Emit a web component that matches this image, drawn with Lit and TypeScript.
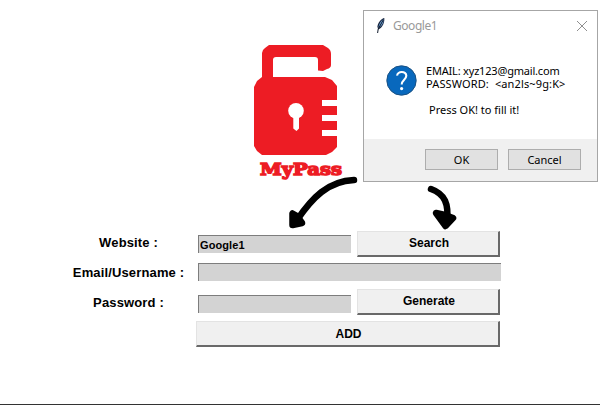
import { LitElement, html, css } from "lit";
import { customElement, property } from "lit/decorators.js";

@customElement("message-dialog")
class MessageDialog extends LitElement {
  @property() heading = "";

  static styles = css`
    :host { display: flex; flex-direction: column; box-sizing: border-box; width: 235px; height: 172px; border: 1px solid #a6a6a6; background: #fff; color: #000; font: 11px/13px "Noto Sans", "Open Sans", sans-serif; }
    .title { display: flex; align-items: center; height: 29px; padding: 0 10px 0 11px; color: #999; font-size: 12px; }
    .title span { flex: 1; margin-left: 7px; letter-spacing: -0.45px; }
    .feather { width: 11px; height: 17px; }
    .close { width: 12px; height: 12px; margin-right: -1px; }
    .body { flex: 1; display: flex; padding: 25px 0 0 22px; }
    .question { width: 31px; height: 31px; }
    .text { margin: -1px 0 0 9px; }
    .line { white-space: pre; height: 13px; }
    .email { letter-spacing: -0.19px; }
    .pass { letter-spacing: 0.13px; }
    .last { margin: 13px 0 0 3px; }
    .footer { display: flex; justify-content: flex-end; gap: 10px; height: 32px; padding: 10px 16px 0 0; background: #f0f0f0; }
    .btn { box-sizing: border-box; width: 73px; height: 21px; padding: 0; border: 1px solid #adadad; background: #e1e1e1; font: inherit; line-height: 19px; color: #000; }
  `;

  render() {
    return html`
      <div class="title">
        <svg class="feather" viewBox="0 0 11 17">
          <path d="M9.3 1C6.5 1.5 3.2 5 2.4 9.5L3.1 12.5C6 12 9.8 7 9.3 1Z" fill="#16233c" />
          <path d="M8.4 2.2C5.6 4 3.9 7 3.3 10.8C6.7 9.5 8.8 6 8.4 2.2Z" fill="#6b9ed0" />
          <path d="M8.2 3L3.2 12L2.6 16" fill="none" stroke="#111b2c" stroke-width="1" />
        </svg>
        <span>${this.heading}</span>
        <svg class="close" viewBox="0 0 12 12"><path d="M1 1L11 11M11 1L1 11" stroke="#8f8f8f" stroke-width="1" /></svg>
      </div>
      <div class="body">
        <svg class="question" viewBox="0 0 31 31">
          <circle cx="15.5" cy="15.5" r="14.7" fill="#0868bd" stroke="#1b5182" />
          <path d="M11.2 10.6C11 6.2 20.3 5.4 20.3 10.8C20.3 14.6 15.7 15 15.7 19.6" fill="none" stroke="#fff" stroke-width="2.1" />
          <circle cx="15.6" cy="23.6" r="1.6" fill="#fff" />
        </svg>
        <div class="text">
          <div class="line email">EMAIL: xyz123@gmail.com</div>
          <div class="line pass">PASSWORD:  &lt;an2ls~9g:K&gt;</div>
          <div class="line last">Press OK! to fill it!</div>
        </div>
      </div>
      <div class="footer"><button class="btn">OK</button><button class="btn">Cancel</button></div>
    `;
  }
}

@customElement("app-root")
class AppRoot extends LitElement {
  static styles = css`
    :host { display: flex; flex-direction: column; position: relative; box-sizing: border-box; width: 600px; height: 405px; overflow: hidden; background: #fff; border-bottom: 1px solid #333; color: #000; }
    .hero { height: 231px; flex: none; padding-left: 240px; box-sizing: border-box; }
    .logo { display: block; width: 115px; height: 185px; }
    .brand { font: bold 16.5px "DejaVu Serif", serif; }
    .form { display: grid; grid-template-columns: 136px 161px 143px; grid-template-rows: 26px 30px 30px 34px; padding-left: 60px; align-items: center; font: bold 12px/15px "Liberation Sans", Arial, sans-serif; }
    .label { text-align: center; font-size: 13px; letter-spacing: 0.14px; padding-left: 1px; }
    .first { padding-bottom: 3px; }
    .field { box-sizing: border-box; height: 18px; width: 153px; margin: 0 0 0 2px; padding: 0 0 0 1px; border: 0; border-top: 1px solid #7d7d7d; border-left: 1px solid #7d7d7d; border-radius: 0; background: #d3d3d3; font: bold 11px "Liberation Sans", Arial, sans-serif; letter-spacing: 0.1px; color: #000; }
    .wide { grid-column: 2 / 4; width: 303px; }
    .low { margin-top: 3px; }
    .push { box-sizing: border-box; height: 26px; padding: 0 0 0 2px; border: solid; border-width: 1px 2px 2px 1px; border-color: #e3e3e3 #696969 #696969 #e3e3e3; background: #f0f0f0; font: inherit; color: #000; }
    .add { grid-column: 2 / 4; padding-top: 1px; }
    .row { grid-column: 1; }
    .arrows { position: absolute; left: 0; top: 0; width: 600px; height: 405px; pointer-events: none; }
    .dialog { position: absolute; left: 363px; top: 10px; }
  `;

  render() {
    return html`
      <div class="hero">
        <svg class="logo" viewBox="240 0 115 185">
          <path fill="#ed1c24" d="M262 77V53Q262 50 265 48L269 45H323L328 48Q331 50 331 54V65Q331 68 327 69L323 71L318 70.500V60Q318 57 315 57H276Q273 57 273 60V77H325L332 80L337 86V100H322V106H337V115H322V121H337V130H322V136H337V147L332 152L326 155H262L257 151L254 146V87L257 81Z" />
          <circle cx="296" cy="110.800" r="7.800" fill="#fff" />
          <path fill="#fff" d="M293.300 115H299V128.500L296.500 131L293.300 128.500Z" />
          <text class="brand" x="260" y="175" textLength="82" lengthAdjust="spacingAndGlyphs" fill="#ed1c24" stroke="#ed1c24" stroke-width="1.4">MyPass</text>
        </svg>
      </div>
      <div class="form">
        <div class="label first">Website :</div>
        <input class="field" value="Google1" />
        <button class="push">Search</button>
        <div class="label">Email/Username :</div>
        <input class="field wide" />
        <div class="label row">Password :</div>
        <input class="field low" />
        <button class="push">Generate</button>
        <span></span>
        <button class="push add">ADD</button>
      </div>
      <svg class="arrows" viewBox="0 0 600 405" fill="none" stroke="#000" stroke-width="6.500" stroke-linecap="round" stroke-linejoin="round">
        <path d="M354 180C328 181 312 198 297 220" />
        <path d="M292.500 213.500V225L302 223L297 216Z" fill="#000" />
        <path d="M431 189C445 194 449 204 447 222" />
        <path d="M436 213L445.500 226L453 218L445 215Z" fill="#000" />
      </svg>
      <message-dialog class="dialog" heading="Google1"></message-dialog>
    `;
  }
}
